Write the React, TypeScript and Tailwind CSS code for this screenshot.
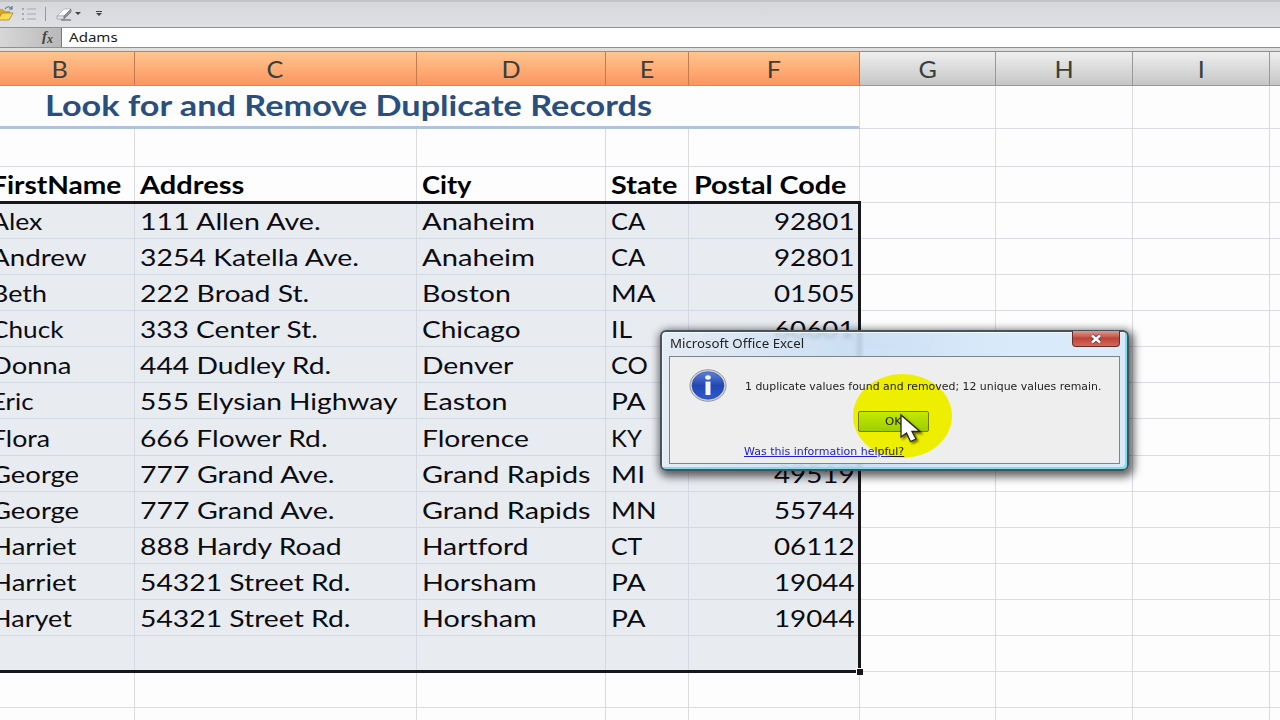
import { useLayoutEffect, useRef, useState } from 'react';
import clsx from 'clsx';

interface Label {
  text: string;
  width: number;
}

type Row = [string, string, string, string, string];

// last column is only a sliver, its letter is off screen
const COLUMNS = ['B', 'C', 'D', 'E', 'F', 'G', 'H', 'I', ''];
const GRID =
  'grid grid-cols-[149px_282px_189px_83px_171px_136px_137px_137px_137px] -ml-3.5 w-[1421px]';

const HEADERS: Label[] = [
  { text: 'FirstName', width: 130 },
  { text: 'Address', width: 104 },
  { text: 'City', width: 50 },
  { text: 'State', width: 66 },
  { text: 'Postal Code', width: 152 },
];

const ROWS: Row[] = [
  ['Alex', '111 Allen Ave.', 'Anaheim', 'CA', '92801'],
  ['Andrew', '3254 Katella Ave.', 'Anaheim', 'CA', '92801'],
  ['Beth', '222 Broad St.', 'Boston', 'MA', '01505'],
  ['Chuck', '333 Center St.', 'Chicago', 'IL', '60601'],
  ['Donna', '444 Dudley Rd.', 'Denver', 'CO', ''],
  ['Eric', '555 Elysian Highway', 'Easton', 'PA', ''],
  ['Flora', '666 Flower Rd.', 'Florence', 'KY', ''],
  ['George', '777 Grand Ave.', 'Grand Rapids', 'MI', '49519'],
  ['George', '777 Grand Ave.', 'Grand Rapids', 'MN', '55744'],
  ['Harriet', '888 Hardy Road', 'Hartford', 'CT', '06112'],
  ['Harriet', '54321 Street Rd.', 'Horsham', 'PA', '19044'],
  ['Haryet', '54321 Street Rd.', 'Horsham', 'PA', '19044'],
  ['', '', '', '', ''],
];

// rendered label widths, in px
const WIDTHS: Record<string, number> = {
  Alex: 51,
  Andrew: 96,
  Beth: 56,
  Chuck: 72,
  Donna: 80,
  Eric: 42,
  Flora: 59,
  George: 88,
  Harriet: 85,
  Haryet: 81,
  '111 Allen Ave.': 181,
  '3254 Katella Ave.': 219,
  '222 Broad St.': 169,
  '333 Center St.': 178,
  '444 Dudley Rd.': 191,
  '555 Elysian Highway': 258,
  '666 Flower Rd.': 188,
  '777 Grand Ave.': 195,
  '888 Hardy Road': 202,
  '54321 Street Rd.': 211,
  Anaheim: 113,
  Boston: 89,
  Chicago: 98,
  Denver: 91,
  Easton: 86,
  Florence: 107,
  'Grand Rapids': 169,
  Hartford: 107,
  Horsham: 115,
  CA: 34,
  MA: 45,
  IL: 21,
  CO: 37,
  PA: 34,
  KY: 31,
  MI: 34,
  MN: 46,
  CT: 31,
};

/** Stretches a single line of text horizontally to a given width */
function FitText({ text, width, className }: Label & { className?: string }) {
  const ref = useRef<HTMLSpanElement>(null);
  const [scale, setScale] = useState(1);

  useLayoutEffect(() => {
    if (ref.current) setScale(width / ref.current.offsetWidth);
  }, [text, width]);

  return (
    <span className="block shrink-0" style={{ width }}>
      <span
        ref={ref}
        className={clsx('inline-block origin-left whitespace-pre', className)}
        style={{ transform: `scaleX(${scale})` }}
      >
        {text}
      </span>
    </span>
  );
}

function Toolbar() {
  return (
    <div className="flex h-[27px] items-center border-t-2 border-[#c3c4c8] bg-gradient-to-b from-[#d6d7db] to-[#dfe0e4]">
      <svg className="h-[27px] w-[110px]" viewBox="0 0 110 27" fill="none">
        <path d="M-2 8h5l2 2h5v8H-2z" fill="#d9a520" />
        <path d="M-2 19 2 12h11l-4 7z" fill="#fbdc55" stroke="#a98224" strokeWidth=".8" />
        <path d="M5 8c2-3 5-3 7 0m0-3v3H9" stroke="#5b7397" strokeWidth="1.2" />
        <g stroke="#a5a8ad" strokeWidth="1.2">
          <path d="M27 8h9M27 13h9M27 18h9" />
          <path d="M22 8h2M22 13h2M22 18h2" strokeWidth="2" />
        </g>
        <path d="M45.5 6v14" stroke="#96989c" />
        <path d="m57 15 7-7h7l-7 7z" fill="#fdfdfe" stroke="#9a9ca5" strokeWidth=".6" />
        <path d="M57 15h7v3h-7z" fill="#e6e7ee" stroke="#8b8d97" strokeWidth=".6" />
        <path d="m64 15 7-7v3l-7 7z" fill="#8e909b" stroke="#666873" strokeWidth=".6" />
        <path d="M61 19h10" stroke="#555" />
        <path d="M75 11h6l-3 3zM96 12h6l-3 3z" fill="#444" />
        <path d="M96 10.500h6" stroke="#444" />
      </svg>
    </div>
  );
}

function FormulaBar() {
  return (
    <div className="flex h-[21px] border-y border-[#8f9196] bg-white">
      <div className="flex w-[62px] items-center justify-end border-r border-[#77797d] bg-gradient-to-r from-[#d7d7d7] to-[#b9b9b9] pr-2 pb-0.5 font-['Liberation_Serif',serif] text-[15px] leading-none font-bold text-[#444] italic">
        f<span className="pt-1 text-[12px]">x</span>
      </div>
      <div className="flex items-center pl-[7px] font-['Noto_Sans',sans-serif] text-xs leading-none text-[#1a1a1a]">
        <FitText text="Adams" width={49} />
      </div>
    </div>
  );
}

function ColumnHeaders() {
  return (
    <div className={clsx(GRID, 'h-[34px]')}>
      {COLUMNS.map((col, i) => (
        <div
          key={i}
          className={clsx(
            "flex items-center justify-center border-r border-b bg-gradient-to-b pt-px font-['Lato',sans-serif] text-2xl leading-none text-[#3a3f3a]",
            i < 5
              ? 'border-r-[#c47a50] border-b-[#d98a60] from-[#fdc590] to-[#fc955f]'
              : 'border-[#999] from-[#efefef] to-[#c6c6c6]',
          )}
        >
          <span className="scale-x-105">{col}</span>
        </div>
      ))}
    </div>
  );
}

function BlankCells({ count }: { count: number }) {
  return Array.from({ length: count }, (_, i) => (
    <div key={i} className="border-r border-b border-[#d9dbe1]" />
  ));
}

function Sheet() {
  return (
    <div className="relative font-['Lato',sans-serif] leading-none text-[#0c0c10] [font-variant-ligatures:none]">
      <div className={clsx(GRID, 'h-[43px]')}>
        <div className="col-span-5 flex items-center border-r border-b-[3px] border-r-[#d9dbe1] border-b-[#b3c1de] pb-0.5 pl-[59px] text-[28px] font-bold text-[#2a4f7e]">
          <FitText text="Look for and Remove Duplicate Records" width={607} />
        </div>
        <BlankCells count={4} />
      </div>
      <div className={clsx(GRID, 'h-[38px]')}>
        <BlankCells count={9} />
      </div>
      <div className={clsx(GRID, 'h-9')}>
        {HEADERS.map((h) => (
          <div
            key={h.text}
            className="flex items-center border-r border-b border-[#d9dbe1] pt-px pl-[5px] text-2xl font-bold text-black"
          >
            <FitText text={h.text} width={h.width} />
          </div>
        ))}
        <BlankCells count={4} />
      </div>
      {ROWS.map((row, r) => (
        <div key={r} className={clsx(GRID, r === 6 ? 'h-[37px]' : 'h-9')}>
          {row.map((value, c) => (
            <div
              key={c}
              className={clsx(
                'flex items-center border-r border-b border-[#d5d9e2] bg-[#e8ebf0] pt-px text-2xl',
                c < 4 ? 'pl-[5px]' : 'justify-end pr-1',
              )}
            >
              {value && <FitText text={value} width={c === 4 ? 81 : WIDTHS[value]} />}
            </div>
          ))}
          <BlankCells count={4} />
        </div>
      ))}
      <div className={clsx(GRID, 'h-9')}>
        <BlankCells count={9} />
      </div>
      <div className={clsx(GRID, 'h-9')}>
        <BlankCells count={9} />
      </div>

      {/* selection outline and fill handle */}
      <div className="absolute top-[115px] -left-4 h-[472px] w-[877px] border-[3px] border-[#17171b]">
        <div className="absolute -right-[5px] -bottom-[5px] size-[7px] border-t border-l border-white bg-[#17171b]" />
      </div>
    </div>
  );
}

function InfoIcon() {
  return (
    <svg className="h-[33px] w-[38px]" viewBox="0 0 38 33" fill="none">
      <defs>
        <linearGradient id="info" x1="0" y1="0" x2="0" y2="1">
          <stop offset="0" stopColor="#5c83d8" />
          <stop offset=".5" stopColor="#2346b4" />
          <stop offset="1" stopColor="#2c5cd0" />
        </linearGradient>
      </defs>
      <ellipse cx="19" cy="16.5" rx="18" ry="15.7" fill="#d8dbe0" stroke="#8e939c" />
      <ellipse cx="19" cy="16.5" rx="16" ry="13.8" fill="url(#info)" stroke="#2a459a" strokeWidth=".6" />
      <ellipse cx="19" cy="8.500" rx="2.8" ry="2.200" fill="#f4f6fa" />
      <path d="M16.500 12.500h5V26h-5z" fill="#f4f6fa" />
    </svg>
  );
}

function MessageDialog() {
  return (
    <div className="absolute top-[330px] left-[660px] flex h-[141px] w-[469px] flex-col rounded-md border-2 border-[#46525c] bg-gradient-to-r from-[#e3ebf5]/80 via-[#c4dbf3]/85 via-45% to-[#d8e9fa]/95 to-75% px-[7px] pb-[5px] font-['DejaVu_Sans',sans-serif] text-[11px] leading-none text-[#222] shadow-[inset_-2px_-2px_0_#7ddfee,inset_1px_1px_0_#eef8fd,2px_3px_9px_3px_rgba(0,0,0,0.6)] backdrop-blur-[2px]">
      <div className="flex h-6 justify-between">
        <div className="pt-1.5 pl-px font-['Noto_Sans',sans-serif] text-xs leading-none">
          <FitText text="Microsoft Office Excel" width={134} />
        </div>
        <div className="-mt-px flex h-4 w-12 items-center justify-center rounded-b border border-t-0 border-[#6e2a28] bg-gradient-to-b from-[#dc9a90] via-[#bd4338] to-[#d06a5a]">
          <svg className="h-2.5 w-3" viewBox="0 0 12 10" fill="none">
            <path d="m2 1.500 8 7m0-7-8 7" stroke="#59363a" strokeWidth="4" />
            <path d="m2 1.500 8 7m0-7-8 7" stroke="#fff" strokeWidth="2.400" />
          </svg>
        </div>
      </div>
      <div className="flex flex-1 border border-[#7c848c] bg-[#eeeeee] pt-3 pl-[19px]">
        <InfoIcon />
        <div className="flex flex-col pt-3 pl-[18px]">
          <FitText text="1 duplicate values found and removed; 12 unique values remain." width={356} />
          <div className="mt-[19px] ml-[113px] flex h-[21px] w-[71px] items-center justify-center rounded-xs border border-[#737a50] bg-gradient-to-b from-[#c4e860] to-[#9ccf30]">
            <FitText text="OK" width={17} />
          </div>
          <div className="mt-3.5 -ml-px text-[#2020d8]">
            <FitText text="Was this information helpful?" width={160} className="underline" />
          </div>
        </div>
      </div>
    </div>
  );
}

export default function App() {
  return (
    <div className="relative h-[720px] w-[1280px] overflow-hidden bg-[#fdfdfe]">
      <Toolbar />
      <FormulaBar />
      <div className="h-1 border-b border-[#8d8d8d] bg-[#dedede]" />
      <ColumnHeaders />
      <Sheet />
      <MessageDialog />
      {/* click highlight and pointer */}
      <div className="absolute top-[374px] left-[853px] h-[84px] w-[99px] rounded-[50%] bg-[#ffff00] mix-blend-multiply" />
      <svg className="absolute top-[413px] left-[899px] h-[32px] w-[26px] drop-shadow-[2px_2px_1px_rgba(0,0,0,0.5)]" viewBox="0 0 26 32">
        <path d="M2 2v22l5.500-4 4 8.500 5.500-2.500-4-7.500h8z" fill="#fff" stroke="#222" strokeWidth="1.300" />
      </svg>
    </div>
  );
}
